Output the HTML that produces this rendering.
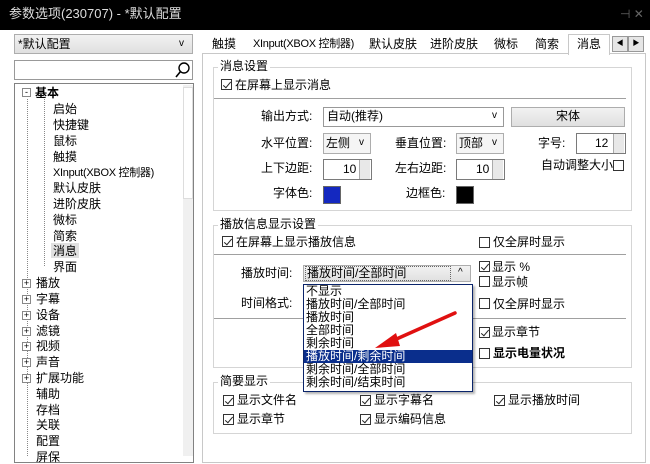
<!DOCTYPE html>
<html><head><meta charset="utf-8"><style>
*{margin:0;padding:0;box-sizing:border-box}
body{width:650px;height:456px;overflow:hidden;background:#fff;position:relative;font-family:"Liberation Sans","Noto Sans CJK SC",sans-serif;font-size:12px;color:#000}
.a{position:absolute}
.t{position:absolute;white-space:nowrap;font-size:12px;line-height:14px}
.xi{font-size:11px;letter-spacing:-0.3px}
.cb{position:absolute;width:11px;height:11px;border:1px solid #333;background:#fff}
.cb.k::after{content:"";position:absolute;left:3px;top:0px;width:3px;height:7px;border:solid #222;border-width:0 1.5px 1.5px 0;transform:rotate(40deg)}
.combo{position:absolute;border:1px solid #adadad;background:linear-gradient(#f2f2f2,#e0e0e0)}
.edit{position:absolute;border:1px solid #7a7a7a;background:#fff}
.grp{position:absolute;border:1px solid #d5d5d5}
.gt{position:absolute;background:#fff;padding:0 2px;font-size:12px;line-height:14px;white-space:nowrap}
.line{position:absolute;height:1px;background:#a0a0a0}
.spin{position:absolute;width:11px;border-left:1px solid #aaa;background:#e8e8e8}
</style></head><body>
<div class="a" style="left:0;top:0;width:650px;height:30px;background:#000"></div>
<div class="t" style="left:9px;top:7px;color:#ddd;font-size:13px">参数选项(230707) - *默认配置</div>
<div class="t" style="left:620px;top:7px;color:#666">⊣ ✕</div>

<!-- left -->
<div class="combo" style="left:14px;top:34px;width:179px;height:20px"></div>
<div class="t" style="left:18px;top:37px">*默认配置</div>
<div class="t" style="left:179px;top:37px;font-size:10px">v</div>
<div class="edit" style="left:14px;top:60px;width:179px;height:20px;border-color:#999"></div>
<svg class="a" style="left:174px;top:61px" width="18" height="18"><circle cx="10" cy="7" r="5" fill="none" stroke="#000" stroke-width="1.4"/><line x1="6.5" y1="10.5" x2="2" y2="16" stroke="#000" stroke-width="1.6"/></svg>
<div class="edit" style="left:14px;top:83px;width:180px;height:380px;border-color:#828282"></div>
<div class="a" style="left:183px;top:85px;width:10px;height:371px;background:#f0f0f0"></div>
<div class="a" style="left:183px;top:87px;width:10px;height:112px;background:#fff;border:1px solid #ddd"></div>
<svg class="a" style="left:0;top:85px" width="182" height="371">
<g stroke="#888" stroke-dasharray="1,1" fill="none">
<line x1="27.5" y1="14" x2="27.5" y2="371"/>
<line x1="44.5" y1="14" x2="44.5" y2="182"/>
</g>
</svg>
<div class="a" style="left:22px;top:88px;width:9px;height:9px;border:1px solid #888;background:#fff;font-size:9px;line-height:7px;text-align:center">-</div>
<div class="t" style="left:35px;top:86px;font-weight:bold">基本</div>
<div class="t" style="left:53px;top:102px">启始</div>
<div class="t" style="left:53px;top:118px">快捷键</div>
<div class="t" style="left:53px;top:134px">鼠标</div>
<div class="t" style="left:53px;top:150px">触摸</div>
<div class="t xi" style="left:53px;top:166px">XInput(XBOX 控制器)</div>
<div class="t" style="left:53px;top:181px">默认皮肤</div>
<div class="t" style="left:53px;top:197px">进阶皮肤</div>
<div class="t" style="left:53px;top:213px">微标</div>
<div class="t" style="left:53px;top:229px">简索</div>
<div class="a" style="left:51px;top:243px;width:28px;height:15px;background:#e0e0e0"></div>
<div class="t" style="left:53px;top:244px">消息</div>
<div class="t" style="left:53px;top:260px">界面</div>
<div class="t" style="left:36px;top:276px">播放</div>
<div class="t" style="left:36px;top:292px">字幕</div>
<div class="t" style="left:36px;top:308px">设备</div>
<div class="t" style="left:36px;top:324px">滤镜</div>
<div class="t" style="left:36px;top:339px">视频</div>
<div class="t" style="left:36px;top:355px">声音</div>
<div class="t" style="left:36px;top:371px">扩展功能</div>
<div class="t" style="left:36px;top:387px">辅助</div>
<div class="t" style="left:36px;top:403px">存档</div>
<div class="t" style="left:36px;top:418px">关联</div>
<div class="t" style="left:36px;top:434px">配置</div>
<div class="t" style="left:36px;top:450px">屏保</div>
<div class="a" style="left:22px;top:279px;width:9px;height:9px;border:1px solid #888;background:#fff;font-size:9px;line-height:7px;text-align:center">+</div>
<div class="a" style="left:22px;top:295px;width:9px;height:9px;border:1px solid #888;background:#fff;font-size:9px;line-height:7px;text-align:center">+</div>
<div class="a" style="left:22px;top:311px;width:9px;height:9px;border:1px solid #888;background:#fff;font-size:9px;line-height:7px;text-align:center">+</div>
<div class="a" style="left:22px;top:327px;width:9px;height:9px;border:1px solid #888;background:#fff;font-size:9px;line-height:7px;text-align:center">+</div>
<div class="a" style="left:22px;top:342px;width:9px;height:9px;border:1px solid #888;background:#fff;font-size:9px;line-height:7px;text-align:center">+</div>
<div class="a" style="left:22px;top:358px;width:9px;height:9px;border:1px solid #888;background:#fff;font-size:9px;line-height:7px;text-align:center">+</div>
<div class="a" style="left:22px;top:374px;width:9px;height:9px;border:1px solid #888;background:#fff;font-size:9px;line-height:7px;text-align:center">+</div>

<!-- tabs -->
<div class="a" style="left:202px;top:53px;width:444px;height:410px;border:1px solid #c8c8c8"></div>
<div class="t" style="left:212px;top:37px">触摸</div>
<div class="t xi" style="left:253px;top:37px">XInput(XBOX 控制器)</div>
<div class="t" style="left:369px;top:37px">默认皮肤</div>
<div class="t" style="left:430px;top:37px">进阶皮肤</div>
<div class="t" style="left:494px;top:37px">微标</div>
<div class="t" style="left:535px;top:37px">简索</div>
<div class="a" style="left:568px;top:34px;width:42px;height:21px;border:1px solid #c8c8c8;border-bottom:none;background:#fff"></div>
<div class="t" style="left:577px;top:37px">消息</div>
<div class="a" style="left:612px;top:36px;width:16px;height:16px;border:1px solid #999;background:#e6e6e6;font-size:7px;line-height:14px;text-align:center">◀</div>
<div class="a" style="left:628px;top:36px;width:16px;height:16px;border:1px solid #999;background:#e6e6e6;font-size:7px;line-height:14px;text-align:center">▶</div>

<!-- group 1 -->
<div class="grp" style="left:213px;top:67px;width:419px;height:144px"></div>
<div class="gt" style="left:218px;top:59px">消息设置</div>
<div class="cb k" style="left:221px;top:79px"></div>
<div class="t" style="left:235px;top:78px">在屏幕上显示消息</div>
<div class="line" style="left:214px;top:98px;width:412px"></div>
<div class="t" style="left:261px;top:109px">输出方式:</div>
<div class="combo" style="left:323px;top:107px;width:181px;height:20px;background:#fff;border-color:#999"></div>
<div class="t" style="left:327px;top:109px">自动(推荐)</div>
<div class="t" style="left:492px;top:109px;font-size:10px">v</div>
<div class="combo" style="left:511px;top:107px;width:114px;height:20px"></div>
<div class="t" style="left:556px;top:109px">宋体</div>

<div class="t" style="left:261px;top:136px">水平位置:</div>
<div class="combo" style="left:323px;top:133px;width:48px;height:21px;background:#f5f5f5"></div>
<div class="t" style="left:326px;top:136px">左侧</div>
<div class="t" style="left:359px;top:136px;font-size:10px">v</div>
<div class="t" style="left:395px;top:136px">垂直位置:</div>
<div class="combo" style="left:456px;top:133px;width:48px;height:21px;background:#f5f5f5"></div>
<div class="t" style="left:459px;top:136px">顶部</div>
<div class="t" style="left:492px;top:136px;font-size:10px">v</div>
<div class="t" style="left:538px;top:136px">字号:</div>
<div class="edit" style="left:576px;top:133px;width:50px;height:21px"></div>
<div class="t" style="left:595px;top:136px">12</div>
<div class="spin" style="left:613px;top:134px;height:19px"></div>

<div class="t" style="left:261px;top:161px">上下边距:</div>
<div class="edit" style="left:323px;top:159px;width:49px;height:21px"></div>
<div class="t" style="left:343px;top:162px">10</div>
<div class="spin" style="left:359px;top:160px;height:19px"></div>
<div class="t" style="left:395px;top:161px">左右边距:</div>
<div class="edit" style="left:456px;top:159px;width:49px;height:21px"></div>
<div class="t" style="left:476px;top:162px">10</div>
<div class="spin" style="left:492px;top:160px;height:19px"></div>
<div class="t" style="left:541px;top:158px">自动调整大小</div>
<div class="cb" style="left:613px;top:160px;width:11px;height:11px"></div>

<div class="t" style="left:273px;top:186px">字体色:</div>
<div class="a" style="left:323px;top:186px;width:18px;height:18px;border:1px solid #666;background:#1428c0"></div>
<div class="t" style="left:406px;top:186px">边框色:</div>
<div class="a" style="left:456px;top:186px;width:18px;height:18px;border:1px solid #666;background:#000"></div>

<!-- group 2 -->
<div class="grp" style="left:213px;top:225px;width:419px;height:143px"></div>
<div class="gt" style="left:218px;top:217px">播放信息显示设置</div>
<div class="cb k" style="left:222px;top:236px"></div>
<div class="t" style="left:236px;top:235px">在屏幕上显示播放信息</div>
<div class="cb" style="left:479px;top:237px"></div>
<div class="t" style="left:493px;top:235px">仅全屏时显示</div>
<div class="line" style="left:214px;top:254px;width:412px"></div>
<div class="t" style="left:241px;top:266px">播放时间:</div>
<div class="combo" style="left:303px;top:265px;width:168px;height:17px"></div>
<div class="a" style="left:305px;top:266px;width:146px;height:15px;border:1px dotted #666"></div>
<div class="t" style="left:307px;top:266px">播放时间/全部时间</div>
<div class="t" style="left:458px;top:266px;font-size:10px">^</div>
<div class="cb k" style="left:479px;top:261px"></div>
<div class="t" style="left:492px;top:260px">显示 %</div>
<div class="cb" style="left:479px;top:276px"></div>
<div class="t" style="left:492px;top:275px">显示帧</div>
<div class="t" style="left:241px;top:296px">时间格式:</div>
<div class="cb" style="left:479px;top:298px"></div>
<div class="t" style="left:493px;top:297px">仅全屏时显示</div>
<div class="line" style="left:214px;top:318px;width:412px"></div>
<div class="cb k" style="left:479px;top:327px"></div>
<div class="t" style="left:492px;top:325px">显示章节</div>
<div class="cb" style="left:479px;top:348px"></div>
<div class="t" style="left:493px;top:346px;font-weight:bold">显示电量状况</div>

<!-- group 3 -->
<div class="grp" style="left:213px;top:382px;width:419px;height:52px"></div>
<div class="gt" style="left:218px;top:374px">简要显示</div>
<div class="cb k" style="left:223px;top:395px"></div>
<div class="t" style="left:237px;top:393px">显示文件名</div>
<div class="cb k" style="left:360px;top:395px"></div>
<div class="t" style="left:374px;top:393px">显示字幕名</div>
<div class="cb k" style="left:494px;top:395px"></div>
<div class="t" style="left:508px;top:393px">显示播放时间</div>
<div class="cb k" style="left:223px;top:414px"></div>
<div class="t" style="left:237px;top:412px">显示章节</div>
<div class="cb k" style="left:360px;top:414px"></div>
<div class="t" style="left:374px;top:412px">显示编码信息</div>

<!-- dropdown -->
<div class="a" style="left:303px;top:284px;width:170px;height:108px;border:1px solid #0a246a;background:#fff;box-shadow:2px 2px 2px rgba(0,0,0,.3)"></div>
<div class="a" style="left:304px;top:350px;width:168px;height:13px;background:#0a2e8c"></div>
<div class="t" style="left:306px;top:285px;line-height:13px">不显示</div>
<div class="t" style="left:306px;top:298px;line-height:13px">播放时间/全部时间</div>
<div class="t" style="left:306px;top:311px;line-height:13px">播放时间</div>
<div class="t" style="left:306px;top:324px;line-height:13px">全部时间</div>
<div class="t" style="left:306px;top:337px;line-height:13px">剩余时间</div>
<div class="t" style="left:306px;top:350px;line-height:13px;color:#fff">播放时间/剩余时间</div>
<div class="t" style="left:306px;top:363px;line-height:13px">剩余时间/全部时间</div>
<div class="t" style="left:306px;top:376px;line-height:13px">剩余时间/结束时间</div>

<svg class="a" style="left:0;top:0" width="650" height="456">
<line x1="455" y1="313" x2="392" y2="341" stroke="#e01010" stroke-width="3.5" stroke-linecap="round"/>
<polygon points="375,348 396,333 400,346" fill="#e01010"/>
</svg>
</body></html>
